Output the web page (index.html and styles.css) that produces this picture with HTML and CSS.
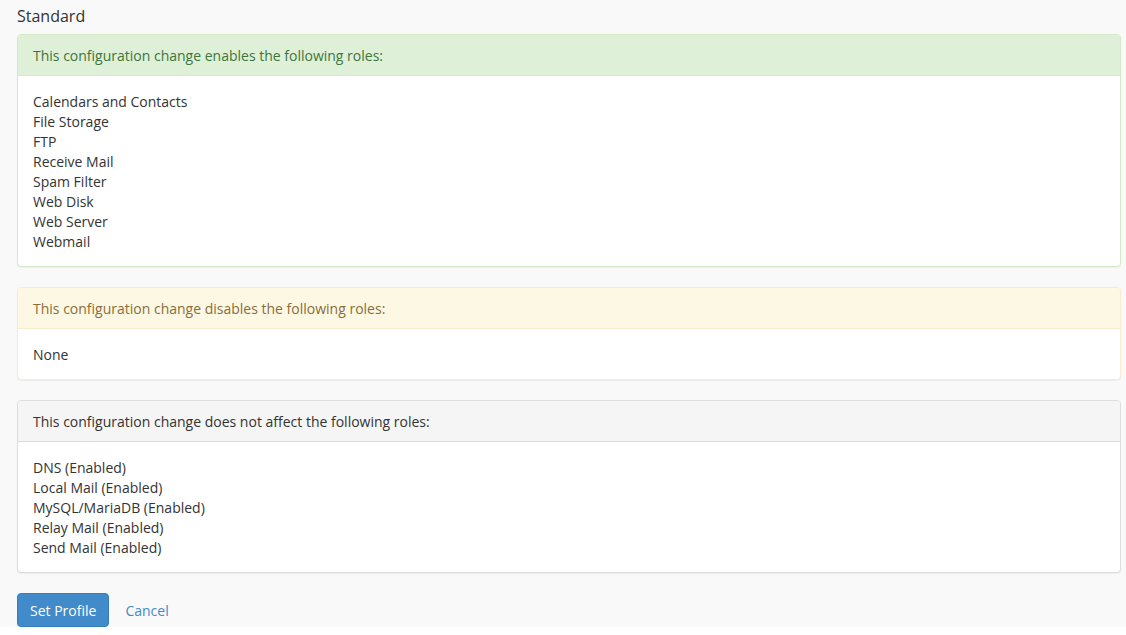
FILE: index.html
```html
<!DOCTYPE html>
<html>
<head>
<meta charset="utf-8">
<link rel="stylesheet" href="styles.css">
</head>
<body>
<div class="page">
  <h4 class="title">Standard</h4>
  <div class="panel panel-success">
    <div class="panel-heading">This configuration change enables the following roles:</div>
    <div class="panel-body">
      <div>Calendars and Contacts</div>
      <div>File Storage</div>
      <div>FTP</div>
      <div>Receive Mail</div>
      <div>Spam Filter</div>
      <div>Web Disk</div>
      <div>Web Server</div>
      <div>Webmail</div>
    </div>
  </div>
  <div class="panel panel-warning">
    <div class="panel-heading">This configuration change disables the following roles:</div>
    <div class="panel-body">
      <div>None</div>
    </div>
  </div>
  <div class="panel panel-default">
    <div class="panel-heading">This configuration change does not affect the following roles:</div>
    <div class="panel-body">
      <div>DNS (Enabled)</div>
      <div>Local Mail (Enabled)</div>
      <div>MySQL/MariaDB (Enabled)</div>
      <div>Relay Mail (Enabled)</div>
      <div>Send Mail (Enabled)</div>
    </div>
  </div>
  <div class="actions">
    <button class="btn-primary" type="button">Set Profile</button>
    <a class="link" href="#">Cancel</a>
  </div>
</div>
</body>
</html>
```

FILE: styles.css
```css
html, body {
  margin: 0;
  padding: 0;
  background: #ffffff;
}
body {
  font-family: "Open Sans", "Liberation Sans", sans-serif;
  font-size: 14px;
  line-height: 20px;
  color: #333333;
}
.page {
  background: #f9f9f9;
  height: 627px;
  overflow: hidden;
  padding: 0 5px 0 17px;
  box-sizing: border-box;
}
.title {
  margin: 0;
  padding-top: 5px;
  font-size: 16px;
  font-weight: 400;
  line-height: 22px;
  height: 29px;
  color: #333333;
}
.panel {
  background: #ffffff;
  border: 1px solid #dddddd;
  border-radius: 4px;
  box-shadow: 0 1px 1px rgba(0, 0, 0, 0.05);
  margin-bottom: 20px;
}
.panel-heading {
  padding: 11px 15px 9px;
  border-bottom: 1px solid #dddddd;
  border-radius: 3px 3px 0 0;
}
.panel-body {
  padding: 16px 15px 14px;
}
.panel-success { border-color: #d6e9c6; }
.panel-success .panel-heading {
  background: #dff0d8;
  color: #3c763d;
  border-bottom-color: #d6e9c6;
}
.panel-warning { border-color: #faebcc; }
.panel-warning .panel-heading {
  background: #fcf8e3;
  color: #8a6d3b;
  border-bottom-color: #faebcc;
}
.panel-default .panel-heading {
  background: #f5f5f5;
  color: #333333;
}
.actions {
  display: flex;
  align-items: center;
  gap: 16px;
  margin-top: 0;
}
.btn-primary {
  font-family: inherit;
  font-size: 14px;
  line-height: 20px;
  padding: 7px 12px 5px;
  color: #ffffff;
  background: #428bca;
  border: 1px solid #357ebd;
  border-radius: 4px;
}
.link {
  color: #428bca;
  text-decoration: none;
  padding-top: 1px;
}
```
